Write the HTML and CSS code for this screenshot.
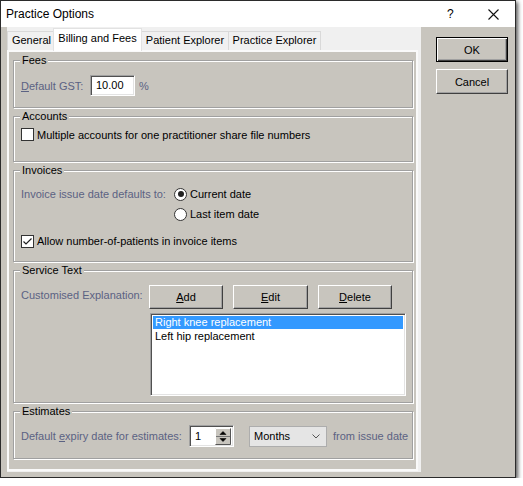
FILE: index.html
```html
<!DOCTYPE html>
<html>
<head>
<meta charset="utf-8">
<title>Practice Options</title>
<link rel="stylesheet" href="styles.css">
</head>
<body>
<div class="window">
  <div class="titlebar">
    <span class="title">Practice Options</span>
    <span class="help">?</span>
    <span class="close"><svg width="11" height="11" viewBox="0 0 11 11"><path d="M0.5 0.5L10.5 10.5M10.5 0.5L0.5 10.5" stroke="#111" stroke-width="1.1" fill="none"/></svg></span>
  </div>
  <div class="body">
    <div class="tabctl">
      <div class="tabstrip">
        <div class="tab t-gen">General</div>
        <div class="tab active t-bill">Billing and Fees</div>
        <div class="tab t-pat">Patient Explorer</div>
        <div class="tab t-prac">Practice Explorer</div>
      </div>
      <div class="pane">
        <div class="group g-fees">
          <span class="legend">Fees</span>
          <div class="row">
            <span class="lbl w-gst"><u>D</u>efault GST:</span>
            <div class="edit sunken gst">10.00</div>
            <span class="lbl pct">%</span>
          </div>
        </div>

        <div class="group g-accounts">
          <span class="legend">Accounts</span>
          <div class="row">
            <span class="check"></span>
            <span class="opt">Multiple accounts for one practitioner share file numbers</span>
          </div>
        </div>

        <div class="group g-invoices">
          <span class="legend">Invoices</span>
          <div class="row r20">
            <span class="lbl w-inv">Invoice issue date defaults to:</span>
            <span class="radio on"></span>
            <span class="opt">Current date</span>
          </div>
          <div class="row r20 indent-inv">
            <span class="radio"></span>
            <span class="opt">Last item date</span>
          </div>
          <div class="row r20 gap-top">
            <span class="check on"><svg width="11" height="11" viewBox="0 0 11 11"><path d="M1.5 5.5L4 8L9.5 2.5" stroke="#222" stroke-width="1.2" fill="none"/></svg></span>
            <span class="opt">Allow number-of-patients in invoice items</span>
          </div>
        </div>

        <div class="group g-service">
          <span class="legend">Service Text</span>
          <div class="row">
            <span class="lbl w-svc">Customised Explanation:</span>
            <div class="btnrow">
              <div class="btn w-add"><u>A</u>dd</div>
              <div class="btn w-edit"><u>E</u>dit</div>
              <div class="btn w-del"><u>D</u>elete</div>
            </div>
          </div>
          <div class="listbox sunken">
            <div class="item sel">Right knee replacement</div>
            <div class="item">Left hip replacement</div>
          </div>
        </div>

        <div class="group g-est">
          <span class="legend">Estimates</span>
          <div class="row">
            <span class="lbl w-est">Default <u>e</u>xpiry date for estimates:</span>
            <div class="spin sunken">
              <span class="spinval">1</span>
              <span class="spinbtns">
                <svg width="16" height="17" viewBox="0 0 16 17">
                  <rect x="0" y="0" width="16" height="17" fill="#c8c5be"/>
                  <path d="M0.5 16.5V0.5H15.5" stroke="#fff" fill="none"/>
                  <path d="M0.5 16.5H15.5V0.5" stroke="#555" fill="none"/>
                  <path d="M1 8.5H15" stroke="#777" fill="none"/>
                  <path d="M5 6.5L8 3.5L11 6.5Z" fill="#000" stroke="#000" stroke-width="0.6"/>
                  <path d="M5 10.5L8 13.5L11 10.5Z" fill="#000" stroke="#000" stroke-width="0.6"/>
                </svg>
              </span>
            </div>
            <div class="combo">
              <span class="comboval">Months</span>
              <svg width="8" height="5" viewBox="0 0 8 5"><path d="M0.5 0.5L4 4L7.5 0.5" stroke="#555" fill="none"/></svg>
            </div>
            <span class="lbl after">from issue date</span>
          </div>
        </div>
      </div>
    </div>
    <div class="side">
      <div class="btn default">OK</div>
      <div class="btn cancel">Cancel</div>
    </div>
  </div>
</div>
</body>
</html>
```

FILE: styles.css
```css
* { box-sizing: border-box; }

body {
  margin: 0;
  background: #fff;
  font-family: "Liberation Sans", Arial, sans-serif;
  font-size: 11px;
  color: #000;
}

.window {
  width: 516px;
  height: 478px;
  border: 1px solid #2b2b2b;
  background: #c8c5be;
  box-shadow: 2px 2px 4px rgba(0, 0, 0, 0.65);
  display: flex;
  flex-direction: column;
}

.titlebar {
  height: 26px;
  background: #fff;
  display: flex;
  align-items: center;
  padding-left: 5px;
  flex-shrink: 0;
}
.title { flex: 1; font-size: 12px; }
.help { width: 41px; font-size: 12px; }
.close { width: 27px; display: flex; align-items: center; }

.body {
  flex: 1;
  display: flex;
  padding-left: 6px;
}

.tabctl {
  width: 414px;
  height: 445px;
  background: #f0f0f0;
  display: flex;
  flex-direction: column;
}

.tabstrip {
  height: 23px;
  display: flex;
  align-items: flex-end;
  flex-shrink: 0;
}
.tab {
  height: 19px;
  line-height: 17px;
  text-align: center;
  border: 1px solid #d9d9d9;
  border-bottom: none;
  margin-right: -1px;
  background: #f0f0f0;
  white-space: nowrap;
}
.t-gen { width: 49px; }
.t-bill { width: 89px; }
.t-pat { width: 88px; }
.t-prac { width: 93px; }
.tab.active {
  height: 23px;
  line-height: 19px;
  margin: 0 -1px -1px -2px;
  background: #fff;
  border-color: #e2e2e2;
  position: relative;
  z-index: 1;
}

.pane {
  flex: 1;
  margin: 0 3px 1px 0;
  border: 2px solid #fafafa;
  background: #c8c5be;
  padding: 8px 3px 0 4px;
}

.group {
  position: relative;
  width: 400px;
  border: 1px solid #a0a0a0;
  box-shadow: inset 1px 1px 0 #fff, 1px 1px 0 #fff;
  padding: 0 0 0 7px;
  margin-bottom: 8px;
}
.legend {
  position: absolute;
  top: -8px;
  left: 6px;
  padding: 0 2px;
  line-height: 14px;
  background: #c8c5be;
}

.g-fees { height: 48px; padding-top: 14px; }
.g-accounts { height: 46px; padding-top: 11px; }
.g-invoices { height: 92px; padding-top: 13px; }
.g-service { height: 133px; padding-top: 14px; }
.g-est { height: 48px; padding-top: 13px; }

.row { display: flex; align-items: center; }
.r20 { height: 20px; }
.indent-inv { padding-left: 153px; }
.gap-top { margin-top: 7px; }

.lbl { color: #5b6283; white-space: nowrap; }
.w-gst { width: 69px; }
.w-inv { width: 153px; }
.w-svc { width: 128px; margin-top: -4px; }
.w-est { width: 168px; }
.pct { margin-left: 4px; }
.after { margin-left: 6px; }

.opt { margin-left: 3px; white-space: nowrap; }

.sunken {
  background: #fff;
  border: 1px solid;
  border-color: #a0a0a0 #fff #fff #a0a0a0;
  box-shadow: inset 1px 1px 0 #505050, inset -1px -1px 0 #e3e3e3;
}

.edit {
  height: 21px;
  line-height: 19px;
  padding-left: 5px;
}
.gst { width: 45px; }

.check {
  width: 13px;
  height: 13px;
  border: 1px solid #333;
  background: #fff;
  display: flex;
  align-items: center;
  justify-content: center;
  flex-shrink: 0;
}
.radio {
  width: 13px;
  height: 13px;
  border: 1px solid #333;
  border-radius: 50%;
  background: #fff;
  display: flex;
  align-items: center;
  justify-content: center;
  flex-shrink: 0;
}
.radio.on::after {
  content: "";
  width: 6px;
  height: 6px;
  border-radius: 50%;
  background: #222;
}

.btn {
  height: 24px;
  display: flex;
  align-items: center;
  justify-content: center;
  background: #c8c5be;
  border: 1px solid;
  border-color: #fff #404040 #404040 #fff;
  box-shadow: inset -1px -1px 0 #a0a0a0;
}
.btnrow { display: flex; gap: 10px; }
.w-add { width: 74px; }
.w-edit { width: 75px; }
.w-del { width: 74px; }

.listbox {
  margin: 4px 0 0 129px;
  width: 256px;
  height: 83px;
  padding: 2px;
}
.item {
  height: 13px;
  line-height: 13px;
  padding-left: 2px;
}
.item.sel { background: #3399ff; color: #fff; }
.item + .item { margin-top: 1px; }

.spin {
  width: 45px;
  height: 22px;
  display: flex;
  align-items: center;
  justify-content: space-between;
  padding: 0 2px 0 5px;
}
.spinbtns { display: flex; }

.combo {
  margin-left: 15px;
  width: 78px;
  height: 21px;
  background: #e5e5e5;
  border: 1px solid #adadad;
  display: flex;
  align-items: center;
  justify-content: space-between;
  padding: 0 6px 0 4px;
}

.side {
  padding: 10px 0 0 15px;
  display: flex;
  flex-direction: column;
  gap: 7px;
}
.side .btn { width: 72px; height: 25px; }
.btn.default {
  border: 1px solid #000;
  box-shadow: inset 1px 1px 0 #fff, inset -1px -1px 0 #404040, inset -2px -2px 0 #a0a0a0;
}
```
